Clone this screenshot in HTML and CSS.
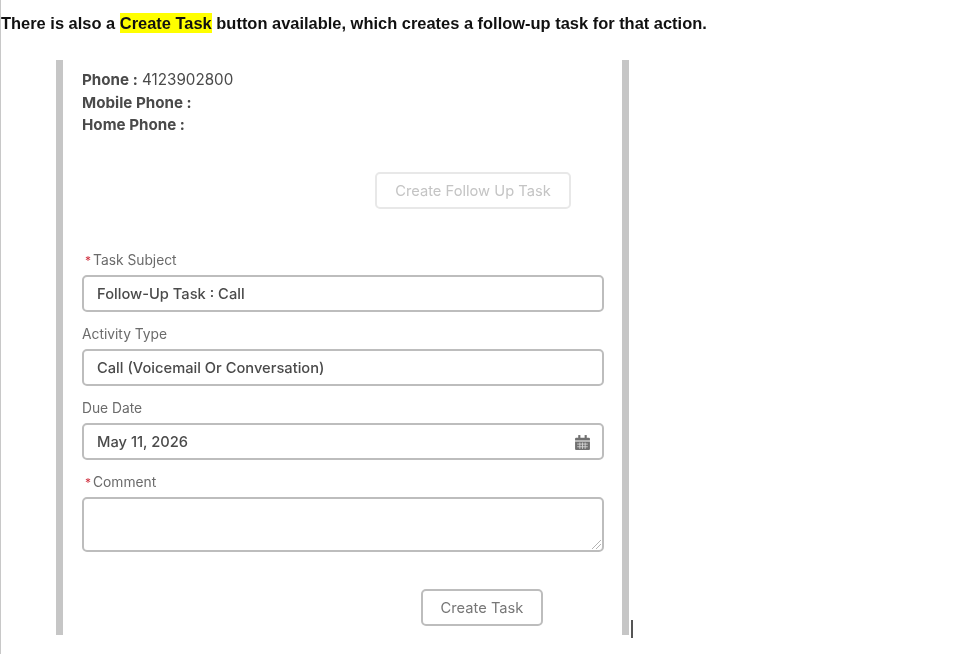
FILE: index.html
```html
<!DOCTYPE html>
<html lang="en">
<head>
<meta charset="utf-8">
<title>Create Task</title>
<link rel="stylesheet" href="styles.css">
</head>
<body>
<main class="page">
  <p class="intro">There is also a <mark class="hl">Create Task</mark> button available, which creates a follow-up task for that action.</p>
  <section class="shot">
    <div class="phones">
      <div><b>Phone :</b> 4123902800</div>
      <div><b>Mobile Phone :</b></div>
      <div><b>Home Phone :</b></div>
    </div>
    <div class="follow-row"><div class="btn btn-disabled">Create Follow Up Task</div></div>
    <div class="label label-req"><span class="req">*</span>Task Subject</div>
    <div class="field">Follow-Up Task : Call</div>
    <div class="label">Activity Type</div>
    <div class="field">Call (Voicemail Or Conversation)</div>
    <div class="label">Due Date</div>
    <div class="field field-date">
      <span>May 11, 2026</span>
      <svg class="cal" viewBox="0 0 16 16" width="17" height="17" aria-hidden="true">
        <rect x="4" y="1" width="2" height="3" fill="#707070"/>
        <rect x="10" y="1" width="2" height="3" fill="#707070"/>
        <path d="M1 4.500a1 1 0 0 1 1-1h12a1 1 0 0 1 1 1V6H1z" fill="#707070"/>
        <path d="M1 7h14v7a1 1 0 0 1-1 1H2a1 1 0 0 1-1-1z" fill="#707070"/>
        <path d="M3 9.500h10M3 12h10M5.500 8v6M8 8v6M10.500 8v6" stroke="#d8d8d8" stroke-width=".8" fill="none"/>
      </svg>
    </div>
    <div class="label label-req"><span class="req">*</span>Comment</div>
    <div class="field field-area">
      <svg class="grip" viewBox="0 0 12 12" width="12" height="12" aria-hidden="true">
        <path d="M11 2 2 11M11 6 6 11" stroke="#b4b4b4" stroke-width="1" fill="none"/>
      </svg>
    </div>
    <div class="submit-row"><div class="btn btn-plain">Create Task</div></div>
  </section>
  <span class="caret"></span>
</main>
</body>
</html>
```
FILE: styles.css
```css
* { box-sizing: border-box; }
html, body { margin: 0; padding: 0; background: #fff; }
.page {
  position: relative;
  width: 966px;
  height: 654px;
  border-left: 1px solid #c8c8c8;
  overflow: hidden;
}
.intro {
  margin: 0;
  padding: 14px 0 0 0;
  height: 60px;
  font: bold 16.45px/18px "Liberation Sans", Arial, sans-serif;
  color: #111;
  filter: blur(0.25px);
}
.hl { background: #ffff00; color: #111; padding: 1px 0; }
.shot {
  margin-left: 55px;
  width: 573px;
  height: 575px;
  border-left: 7px solid #c6c6c6;
  border-right: 7px solid #c6c6c6;
  padding: 8px 19px 0 19px;
  font-family: Inter, "Liberation Sans", sans-serif;
  color: #4a4a4a;
  filter: blur(0.45px);
}
.phones { font-size: 15.2px; line-height: 22.500px; padding-top: 1px; margin-bottom: -1px; }
.phones b { font-weight: 700; }
.follow-row { display: flex; justify-content: flex-end; padding: 36px 32px 0 0; height: 115px; }
.btn {
  display: flex;
  align-items: center;
  justify-content: center;
  height: 37px;
  padding-top: 2px;
  border-radius: 5px;
  font-size: 14.7px;
  background: #fff;
}
.btn-disabled { width: 196px; border: 2px solid #e8e8e8; color: #c4c4c4; }
.btn-plain { width: 122px; border: 2px solid #bdbdbd; color: #777; }
.label { font-size: 13.8px; line-height: 18px; color: #6b6b6b; height: 24px; }
.label-req { padding-left: 3px; }
.req { color: #d0303f; margin-right: 2px; font-size: 12px; }
.field {
  display: flex;
  align-items: center;
  justify-content: space-between;
  position: relative;
  width: 522px;
  height: 37px;
  margin-bottom: 13px;
  padding: 1px 11px 0 13px;
  border: 2px solid #bdbdbd;
  border-radius: 5px;
  font-size: 14.7px;
  font-weight: 500;
  color: #4a4a4a;
}
.field-area { height: 55px; margin-bottom: 0; }
.cal { margin-top: 2px; }
.grip { position: absolute; right: 0; bottom: 0; }
.submit-row { display: flex; justify-content: flex-end; padding: 37px 60px 0 0; }
.caret {
  position: absolute;
  left: 630px;
  top: 620px;
  width: 2px;
  height: 18px;
  background: #555;
}
```
